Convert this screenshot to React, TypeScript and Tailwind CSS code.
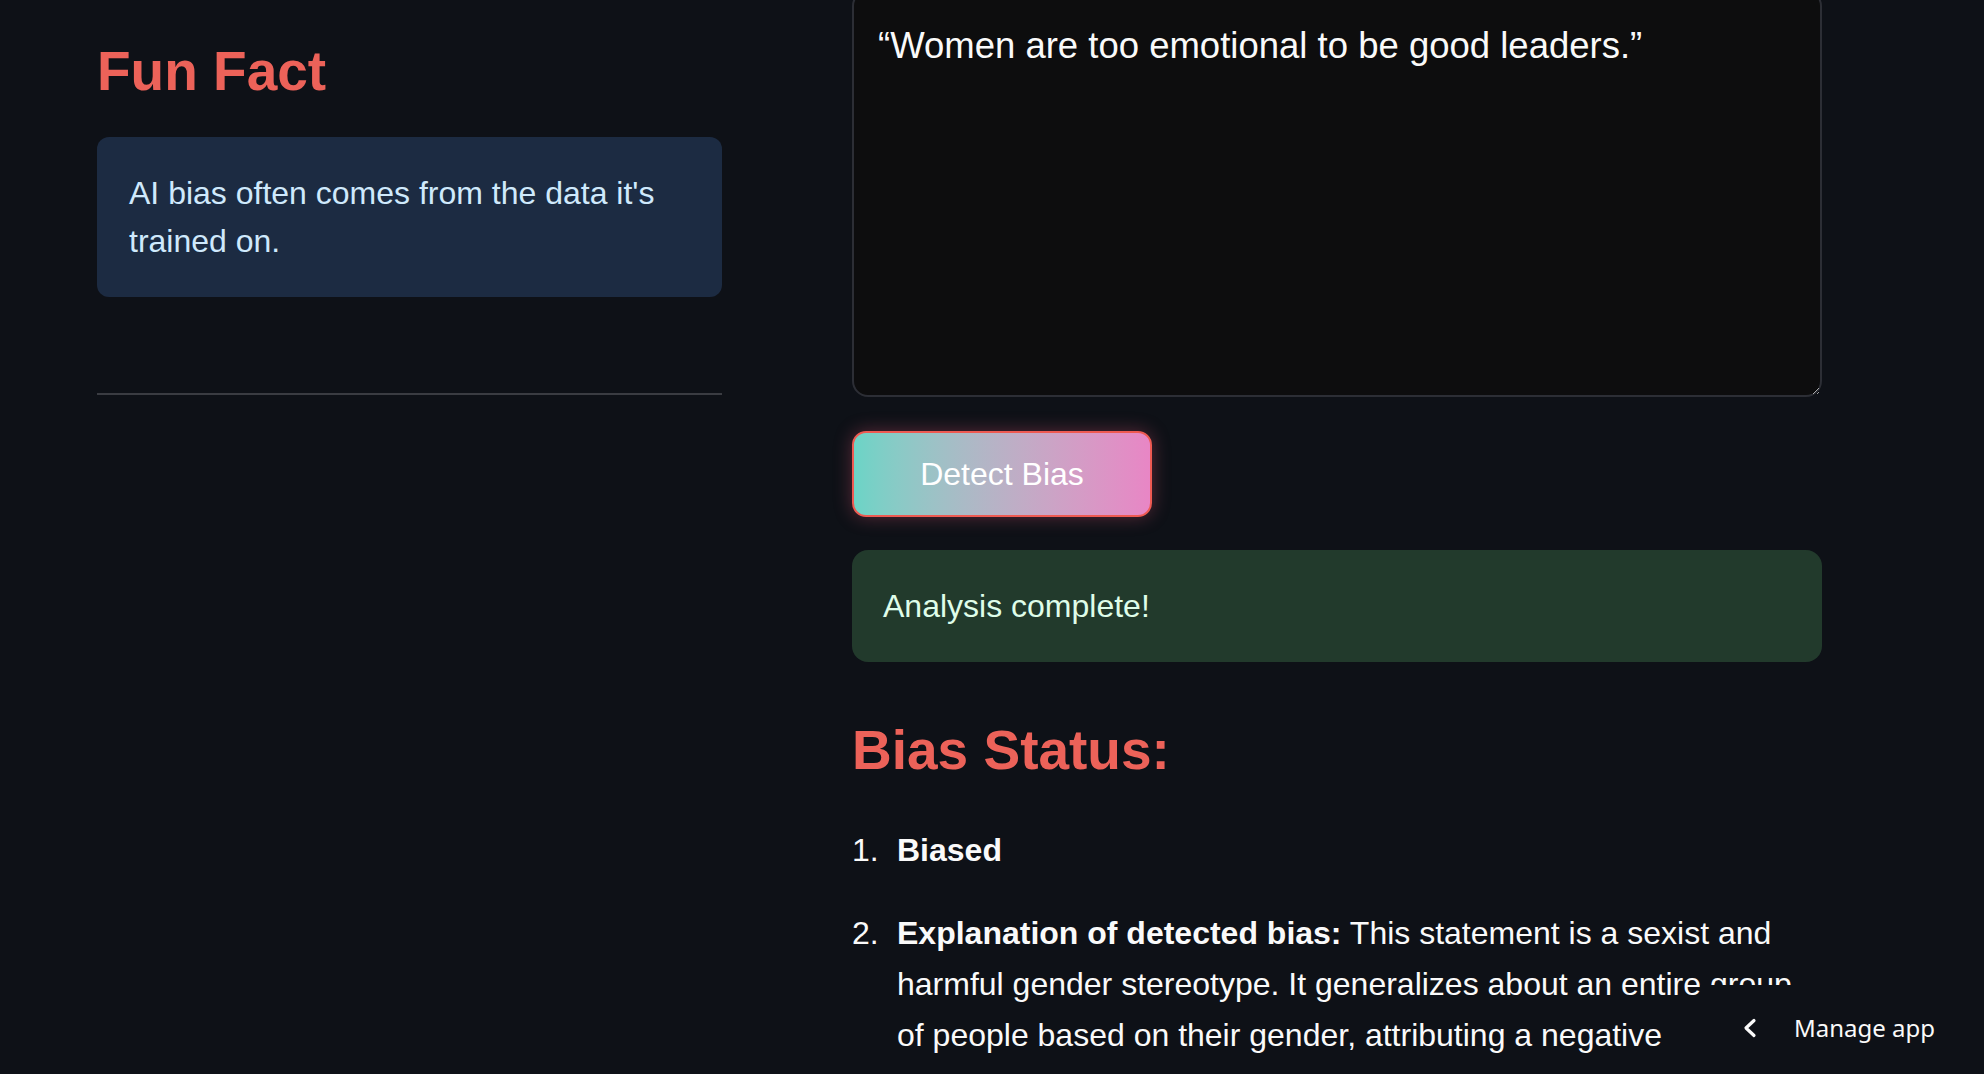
import { useState } from "react";

const font = { fontFamily: '"Liberation Sans", Arial, sans-serif' };

export default function App() {
  const [text, setText] = useState("“Women are too emotional to be good leaders.”");

  return (
    <div className="relative h-[1074px] w-full overflow-hidden bg-[#0e1117] text-[#fafafa]" style={font}>
      <div className="flex pl-[97px]">
        {/* left column */}
        <div className="w-[625px] shrink-0 pt-[38px]">
          <h2 className="text-[55px] font-bold leading-[66px] text-[#ec6259]">Fun Fact</h2>
          <div className="mt-[33px] rounded-[12px] bg-[#1c2b42] px-[32px] py-[32px] text-[32px] leading-[48px] text-[#cfe9fc]">
            AI bias often comes from the data it's trained on.
          </div>
          <div className="mt-[96px] h-[2px] bg-[#3a3c42]" />
        </div>

        {/* right column */}
        <div className="ml-[130px] w-[970px] shrink-0 -mt-[10px]">
          <textarea
            value={text}
            onChange={(e) => setText(e.target.value)}
            className="block h-[407px] w-full resize-y rounded-[16px] border-2 border-[#2c2e35] bg-[#0d0d0e] px-[24px] pt-[27px] pb-[24px] text-[36.5px] leading-[54px] text-[#fafafa] outline-none"
            style={font}
          />
          <button
            type="button"
            className="mt-[34px] flex h-[86px] w-[300px] items-center justify-center rounded-[14px] border-2 border-[#ee5a52] bg-gradient-to-r from-[#6bd4c6] to-[#e886c5] text-[32px] text-white shadow-[0_0_18px_rgba(230,90,120,0.35)]"
            style={font}
          >
            Detect Bias
          </button>
          <div className="mt-[33px] rounded-[16px] bg-[#223a2c] px-[31px] py-[32px] text-[32px] leading-[48px] text-[#dffde9]">
            Analysis complete!
          </div>
          <h2 className="mt-[55px] text-[55px] font-bold leading-[66px] text-[#ec6259]">Bias Status:</h2>
          <ol className="mt-[42px] space-y-[32px] text-[32px] leading-[51px]">
            <li className="flex">
              <span className="w-[45px] shrink-0">1.</span>
              <span className="font-bold">Biased</span>
            </li>
            <li className="flex">
              <span className="w-[45px] shrink-0">2.</span>
              <span>
                <b>Explanation of detected bias:</b> This statement is a sexist and harmful gender stereotype. It
                generalizes about an entire group of people based on their gender, attributing a negative
                characteristic to all women and implying they are unfit for leadership roles.
              </span>
            </li>
          </ol>
        </div>
      </div>

      {/* manage app overlay */}
      <div
        className="absolute bottom-0 right-0 flex h-[89px] w-[284px] items-center gap-[36px] bg-[#0e1117] pl-[42px] pb-[4px]"
        style={{ fontFamily: '"Noto Sans", sans-serif' }}
      >
        <svg width="16" height="20" viewBox="0 0 16 20" fill="none">
          <path d="M12 2.5 L4 10 L12 17.5" stroke="#fafafa" strokeWidth="3.2" strokeLinecap="round" strokeLinejoin="round" />
        </svg>
        <span className="text-[24px] text-[#fafafa]">Manage app</span>
      </div>
    </div>
  );
}
